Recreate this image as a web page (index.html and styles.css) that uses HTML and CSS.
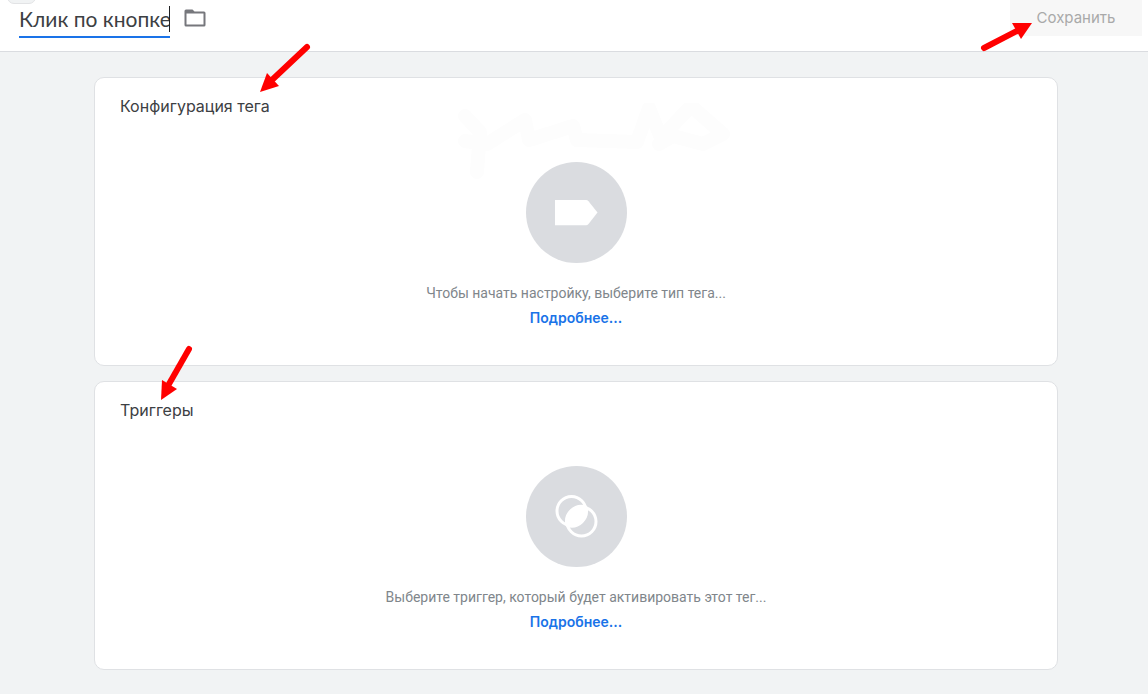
FILE: index.html
```html
<!DOCTYPE html>
<html lang="ru">
<head>
<meta charset="utf-8">
<meta name="viewport" content="width=device-width, initial-scale=1">
<title>Клик по кнопке</title>
<link rel="stylesheet" href="styles.css">
</head>
<body>
<header class="topbar">
  <span class="chip" aria-hidden="true"></span>
  <div class="name">
    <input class="name-input" type="text" value="Клик по кнопке" aria-label="Название тега">
    <span class="caret" aria-hidden="true"></span>
  </div>
  <button class="folder" type="button" aria-label="Папка">
    <svg width="22" height="18" viewBox="0 0 22 18"><path fill="#76777c" fill-rule="evenodd" d="M2 .5h6.5l2 2H20q1.500 0 1.500 1.500v12q0 1.500-1.500 1.500H2Q.5 17.500.5 16V2Q.5.500 2 .500zM2.500 4.500v11h17v-11z"/></svg>
  </button>
  <button class="save" type="button" disabled>Сохранить</button>
</header>
<main class="content">
  <section class="card">
    <h2 class="card-title">Конфигурация тега</h2>
    <svg class="traces" width="284" height="76" viewBox="0 0 284 76" aria-hidden="true">
      <g fill="none" stroke="#fdfdfd" stroke-width="14" stroke-linecap="round" stroke-linejoin="round">
        <path d="M10 13l15 16-3 40M10 38l22 3 38-24 4 20 44-14 4 14 60 2 12-34 12 30 30-32 32 28-20 10-30-8-14 8"/>
      </g>
    </svg>
    <div class="empty">
      <svg class="disc" viewBox="0 0 101 101" aria-hidden="true"><circle cx="50.500" cy="50.500" r="50.500" fill="#dadce0"/><path fill="#fff" d="M29 38h31q1.500 0 2.500 1.200L71.500 50.500 62.500 62q-1 1.200-2.500 1.200H29z"/></svg>
      <p class="hint">Чтобы начать настройку, выберите тип тега...</p>
      <a class="more" href="#tag">Подробнее...</a>
    </div>
  </section>
  <section class="card">
    <h2 class="card-title">Триггеры</h2>
    <div class="empty">
      <svg class="disc" viewBox="0 0 101 101" aria-hidden="true"><circle cx="50.500" cy="50.500" r="50.500" fill="#dadce0"/><g fill="none" stroke="#fff" stroke-width="3"><circle cx="45.500" cy="45" r="14.500"/><circle cx="55.500" cy="55.500" r="14.500"/></g><path fill="#fff" stroke="#fff" stroke-width="4" stroke-linejoin="round" d="M59.500 41.500A14.500 14.500 0 0 0 41.500 59A14.500 14.500 0 0 0 59.500 41.500z"/></svg>
      <p class="hint">Выберите триггер, который будет активировать этот тег...</p>
      <a class="more" href="#trigger">Подробнее...</a>
    </div>
  </section>
</main>
<svg class="arrow arrow-save" width="54" height="32" viewBox="0 0 54 32" aria-hidden="true"><path d="M5 28L38 11" stroke="#f00" stroke-width="6" stroke-linecap="round"/><path fill="#f00" d="M53 3L33 3L42 19z"/></svg>
<svg class="arrow arrow-config" width="54" height="52" viewBox="0 0 54 52" aria-hidden="true"><path d="M49 5L15 37" stroke="#f00" stroke-width="6" stroke-linecap="round"/><path fill="#f00" d="M2 50L9 31L21 44z"/></svg>
<svg class="arrow arrow-trigger" width="36" height="58" viewBox="0 0 36 58" aria-hidden="true"><path d="M31 5L11 40" stroke="#f00" stroke-width="6" stroke-linecap="round"/><path fill="#f00" d="M3 56L4 36L19 45z"/></svg>
</body>
</html>
```
FILE: styles.css
```css
* { box-sizing: border-box; }
body {
  position: relative;
  margin: 0;
  min-height: 100vh;
  background: #f1f3f4;
  font-family: Roboto, "Liberation Sans", sans-serif;
  color: #3c4043;
}
.topbar {
  position: relative;
  display: flex;
  align-items: flex-start;
  height: 52px;
  padding: 0 6px 0 19px;
  background: #fff;
  border-bottom: 1px solid #dadce0;
}
.chip {
  position: absolute;
  left: 7px;
  top: -12px;
  width: 29px;
  height: 16px;
  border: 1px solid #e2e3e5;
  border-radius: 7px;
  background: #f1f3f4;
}
.name { position: relative; width: 151px; }
.name-input {
  display: block;
  width: 100%;
  height: 38px;
  padding: 0;
  border: 0;
  border-bottom: 2px solid #1a73e8;
  outline: 0;
  background: transparent;
  font-family: Lato, sans-serif;
  font-size: 21px;
  color: #3c4043;
}
.caret {
  position: absolute;
  right: 0;
  top: 6px;
  width: 1px;
  height: 26px;
  background: #202124;
}
.folder {
  display: flex;
  margin: 9px 0 0 14px;
  padding: 0;
  border: 0;
  background: none;
}
.save {
  height: 36px;
  width: 132px;
  margin-left: auto;
  padding: 0 0 2px;
  border: 0;
  background: #f7f7f7;
  color: #a9a9a9;
  font: 400 15px Inter, sans-serif;
}
.content {
  display: flex;
  flex-direction: column;
  gap: 15px;
  padding: 25px 90px 24px 94px;
}
.card {
  position: relative;
  padding: 18px 25px 35px;
  border: 1px solid #dfe1e4;
  border-radius: 10px;
  background: #fff;
}
.card-title {
  margin: 0;
  font: 400 16px/20px Inter, sans-serif;
  color: #3c4043;
}
.traces { position: absolute; left: 360px; top: 25px; }
.empty {
  position: relative;
  display: flex;
  flex-direction: column;
  align-items: center;
  padding-top: 46px;
}
.disc { width: 101px; height: 101px; }
.hint {
  margin: 18px 0 0;
  font-size: 14px;
  line-height: 24px;
  color: #80868b;
}
.more {
  font: 600 14px/25px Inter, sans-serif;
  color: #1a73e8;
  text-decoration: none;
}
.arrow { position: absolute; }
.arrow-save { left: 979px; top: 20px; }
.arrow-config { left: 258px; top: 42px; }
.arrow-trigger { left: 158px; top: 344px; }
```
